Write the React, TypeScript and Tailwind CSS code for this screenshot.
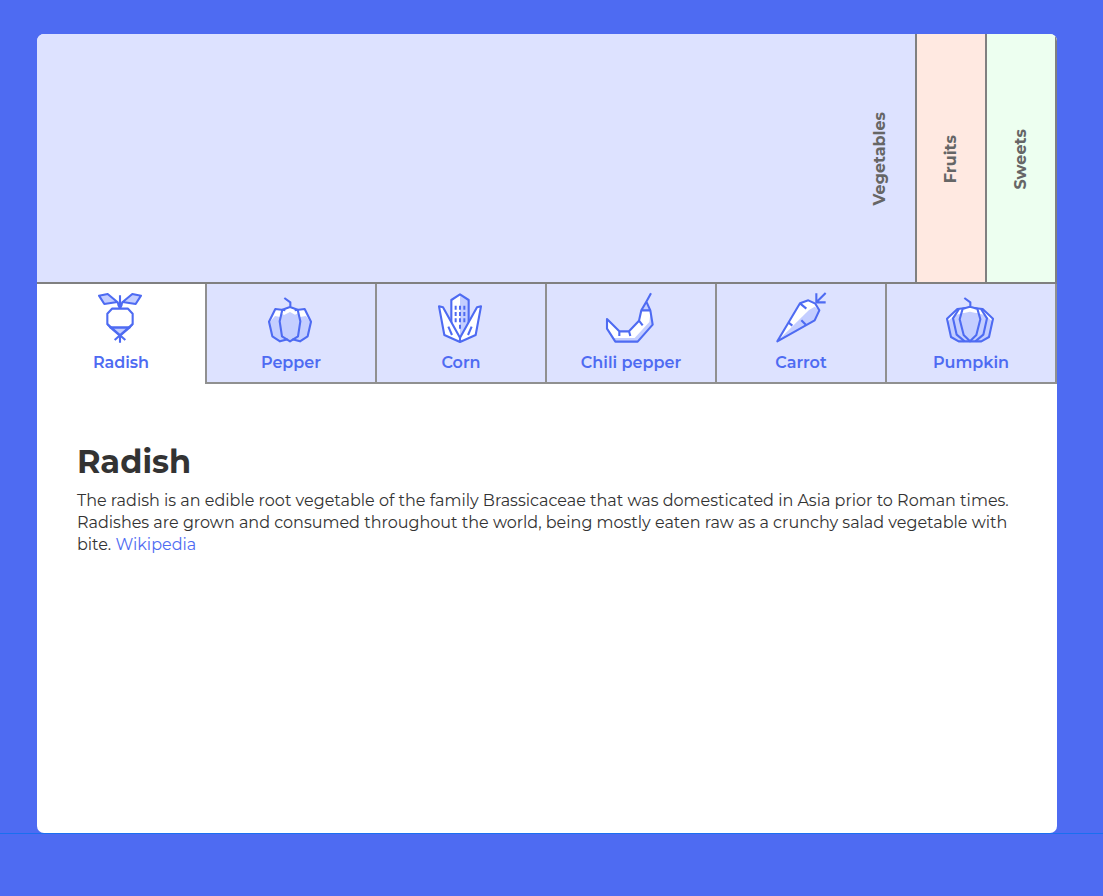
import type { ReactNode } from 'react';

function Icon({ children }: { children: ReactNode }) {
  return (
    <svg
      viewBox="0 0 180 180"
      className="block h-[60px] w-[60px] shrink-0"
      fill="none"
      stroke="#4e6bf2"
      strokeWidth="6.3"
      strokeLinejoin="round"
      aria-hidden="true"
    >
      {children}
    </svg>
  );
}

const Radish = () => (
  <Icon>
    <path fill="#c4ceff" d="M27 29 53 24 82 48 43 54Z M153 29 127 24 98 48 137 54Z" />
    <path d="M82 48 90 62 98 48M90 28V70M84 54 90 68 96 54" />
    <path fill="#c4ceff" d="M61 124H119L90 149Z" />
    <path fill="#fff" d="M66 68H114L128 83V114L119 124H61L52 114V83Z" />
    <path d="M52 114 106 162M128 114 74 162M90 146V170" />
  </Icon>
);

const Pepper = () => (
  <Icon>
    <path stroke="none" fill="#fff" d="M63 71 46 69 27 107 37 151 60 166 90 161 120 166 143 151 153 107 134 69 117 71 90 63Z" />
    <path stroke="none" fill="#c4ceff" d="M60 93 45 90 27 111 38 150 60 166 90 162 120 166 143 150 153 111 138 90 120 93 114 82 105 86 90 78 72 87 64 82Z" />
    <path d="M76 73 46 69 27 107 37 151 60 166 83 160M104 73 134 69 153 107 143 151 120 166 97 160" />
    <path d="M67 71 90 63 113 71 121 106 114 151 90 166 66 151 59 106ZM73 36 91 49V66" />
  </Icon>
);

const Corn = () => (
  <Icon>
    <path stroke="none" fill="#fff" d="M64 42 90 25V155L64 120Z" />
    <path stroke="none" fill="#c4ceff" d="M90 25 116 42V120L90 155Z" />
    <path d="M64 123V42L90 25 116 42V123" />
    <path fill="#fff" d="M90 168 43 147 27 61 39 64 90 155 141 64 153 61 137 147 90 168ZM90 153V168" />
    <path d="M55 122 66 147M125 122 114 147" />
    <path strokeWidth="6" strokeDasharray="12 7" d="M77 59V110M90 59V128M103 59V110" />
  </Icon>
);

const Chili = () => (
  <Icon>
    <path stroke="none" fill="#fff" d="M21 99 58 136H87L117 104 124 73H151L158 116 113 167H46L21 128Z" />
    <path stroke="none" fill="#c4ceff" d="M151 83 158 116 113 167H46L38 156H104L148 108ZM124 73 138 45 151 73Z" />
    <path d="M153 22 139 47 124 73 117 104 87 136H58L21 99V128L46 167H113L158 116 151 73 139 47M124 73H151M117 104 128 118M87 136 91 150M58 136V150" />
  </Icon>
);

const Carrot = () => (
  <Icon>
    <path stroke="none" fill="#fff" d="M22 166 90 52 115 43 136 53 148 73 134 103Z" />
    <path stroke="none" fill="#c4ceff" d="M22 166 117 72 134 62 148 73 134 103Z" />
    <path d="M22 166 90 52 115 43 136 53 148 73 134 103ZM90 52 109 68M55 109 67 119M94 103 109 118" />
    <path d="M167 21 139 49M139 22V49H167" />
  </Icon>
);

const Pumpkin = () => (
  <Icon>
    <path stroke="none" fill="#fff" d="M65 67 44 72 21 98 33 153 56 166H124L147 153 159 98 136 72 115 67 90 62Z" />
    <path stroke="none" fill="#c4ceff" d="M66 82 44 88 21 108 33 153 56 166H124L147 153 159 108 136 88 114 82 104 80 90 77 76 80Z" />
    <path d="M78 66 52 69 21 98 33 153 56 166H124L147 153 159 98 128 69 102 66" />
    <path d="M57 69 39 97 50 146 74 166M123 69 141 97 130 146 106 166" />
    <path d="M68 68 90 62 112 68 121 100 109 147 90 166 71 147 59 100ZM73 36 91 49V66" />
  </Icon>
);

const tabs = [
  { name: 'Radish', icon: <Radish /> },
  { name: 'Pepper', icon: <Pepper /> },
  { name: 'Corn', icon: <Corn /> },
  { name: 'Chili pepper', icon: <Chili /> },
  { name: 'Carrot', icon: <Carrot /> },
  { name: 'Pumpkin', icon: <Pumpkin /> },
];

const categories = [
  { name: 'Vegetables', style: 'grow justify-end bg-[#dde2ff] pr-[23px]' },
  { name: 'Fruits', style: 'w-[70px] justify-center bg-[#ffe9e1] pr-px' },
  { name: 'Sweets', style: 'w-[70px] justify-center bg-[#edfff0] pr-px' },
];

export default function App() {
  return (
    <div className="flex h-[896px] flex-col bg-[#4e6bf2] font-[Montserrat,Inter,sans-serif] text-[#333]">
      <div className="flex h-[834px] flex-col border-b border-[#1a6ff0] pt-[34px] pr-[46px] pl-[37px]">
        <main className="flex h-[799px] w-[1020px] flex-col overflow-hidden rounded-[7px] bg-white">
          <nav className="flex h-[250px] shrink-0 border-b-2 border-[#808080]">
            {categories.map((c) => (
              <button key={c.name} className={`flex items-center border-r-2 border-[#808080] pt-0.5 ${c.style}`}>
                <span className="rotate-180 text-base leading-6 font-bold text-[#666] [writing-mode:vertical-rl]">
                  {c.name}
                </span>
              </button>
            ))}
          </nav>
          <nav className="grid h-[100px] shrink-0 grid-cols-6">
            {tabs.map((t, i) => (
              <button
                key={t.name}
                className={`flex flex-col items-center border-r-2 border-[#909090] pt-0.5 ${
                  i === 0 ? 'bg-white' : 'border-b-2 bg-[#dde2ff]'
                }`}
              >
                <span className="mr-0.5">{t.icon}</span>
                <span className="mt-[5px] text-base leading-6 font-semibold text-[#4e6bf2]">{t.name}</span>
              </button>
            ))}
          </nav>
          <article className="px-10 pt-[58px]">
            <h1 className="text-[32px] leading-10 font-bold">Radish</h1>
            <p className="mt-2 text-base leading-[22px]">
              The radish is an edible root vegetable of the family Brassicaceae that was domesticated in Asia prior to
              Roman times. Radishes are grown and consumed throughout the world, being mostly eaten raw as a crunchy
              salad vegetable with bite. <a className="text-[#4e6bf2]">Wikipedia</a>
            </p>
          </article>
        </main>
      </div>
    </div>
  );
}
